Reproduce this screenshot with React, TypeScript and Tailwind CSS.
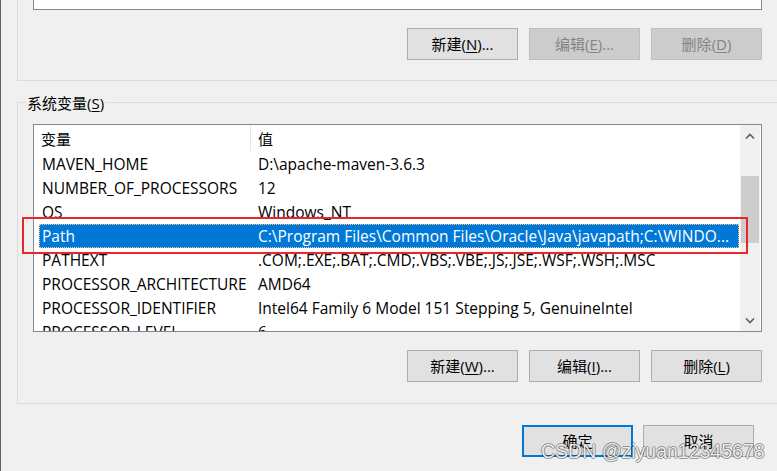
const FONT = "font-['Open_Sans','Noto_Sans_CJK_SC',sans-serif]";

type BtnProps = { label: string; hot: string; rest: string; disabled?: boolean; primary?: boolean };

function Btn({ label, hot, rest, disabled, primary }: BtnProps) {
  const base = "w-[111px] h-[32px] flex items-center justify-center text-[15px] leading-none";
  const look = disabled
    ? "bg-[#cccccc] border border-[#bfbfbf] text-[#838383]"
    : primary
      ? "bg-[#e1e1e1] border-2 border-[#0078d7] text-black"
      : "bg-[#e1e1e1] border border-[#adadad] text-black";
  return (
    <div className={`${base} ${look}`}>
      <span>
        {label}
        {hot && "("}
        {hot && <span className="underline underline-offset-2">{hot}</span>}
        {hot && ")"}
        {rest}
      </span>
    </div>
  );
}

const rows: [string, string][] = [
  ["MAVEN_HOME", "D:\\apache-maven-3.6.3"],
  ["NUMBER_OF_PROCESSORS", "12"],
  ["OS", "Windows_NT"],
  ["Path", "C:\\Program Files\\Common Files\\Oracle\\Java\\javapath;C:\\WINDO..."],
  ["PATHEXT", ".COM;.EXE;.BAT;.CMD;.VBS;.VBE;.JS;.JSE;.WSF;.WSH;.MSC"],
  ["PROCESSOR_ARCHITECTURE", "AMD64"],
  ["PROCESSOR_IDENTIFIER", "Intel64 Family 6 Model 151 Stepping 5, GenuineIntel"],
  ["PROCESSOR_LEVEL", "6"],
];

function Chevron({ up }: { up?: boolean }) {
  return (
    <svg width="10" height="6" viewBox="0 0 10 6" fill="none">
      <path
        d={up ? "M1 5.5 L5 1.5 L9 5.5" : "M1 0.5 L5 4.5 L9 0.5"}
        stroke="#606060"
        strokeWidth="1.6"
      />
    </svg>
  );
}

export default function App() {
  return (
    <div className={`relative w-[777px] h-[471px] overflow-hidden bg-[#f0f0f0] border-l border-[#5f5f5f] ${FONT}`}>
      {/* user variables group, bottom part only */}
      <div className="ml-[16px] h-[81px] border-l border-b border-[#dcdcdc]">
        <div className="ml-[15px] w-[729px] h-[10px] bg-white border-x border-b border-[#828790]" />
        <div className="mt-[18px] ml-[389px] flex gap-[11px]">
          <Btn label="新建" hot="N" rest="..." />
          <Btn label="编辑" hot="E" rest="..." disabled />
          <Btn label="删除" hot="D" rest="" disabled />
        </div>
      </div>

      {/* system variables group */}
      <div className="relative mt-[21px] ml-[16px] border-l border-t border-b border-[#dcdcdc] pt-[21px] pb-[21px]">
        <div className="absolute -top-[10px] left-[8px] px-[1px] bg-[#f0f0f0] text-[15px] leading-[20px] text-black">
          系统变量(<span className="underline underline-offset-2">S</span>)
        </div>

        <div className="ml-[15px] w-[729px] h-[208px] bg-white border border-[#828790] flex overflow-hidden">
          <div className="flex-1 flex flex-col text-[15.5px] text-black">
            <div className="h-[27px] flex items-center shrink-0">
              <div className="w-[217px] h-[25px] pl-[7px] pt-[2px] border-r border-[#e5e5e5] flex items-center text-[15px]">
                变量
              </div>
              <div className="pl-[7px] pt-[2px] text-[15px]">值</div>
            </div>
            {rows.map(([name, value]) => {
              const sel = name === "Path";
              return (
                <div
                  key={name}
                  className={`ml-[5px] mr-[1px] h-[24px] shrink-0 flex items-center whitespace-nowrap ${
                    sel ? "bg-[#0078d7] text-white outline-1 outline-dotted -outline-offset-1 outline-[#ffc58a]" : ""
                  }`}
                >
                  <div className="w-[212px] pl-[3px] leading-[24px]">{name}</div>
                  <div className="pl-[7px] leading-[24px]">{value}</div>
                </div>
              );
            })}
          </div>

          <div className="w-[20px] mr-[1px] bg-[#f0f0f0] flex flex-col">
            <div className="h-[21px] flex items-center justify-center">
              <Chevron up />
            </div>
            <div className="flex-1">
              <div className="mt-[30px] mx-[1px] h-[67px] bg-[#cdcdcd]" />
            </div>
            <div className="h-[21px] flex items-center justify-center">
              <Chevron />
            </div>
          </div>
        </div>

        <div className="mt-[18px] ml-[389px] flex gap-[11px]">
          <Btn label="新建" hot="W" rest="..." />
          <Btn label="编辑" hot="I" rest="..." />
          <Btn label="删除" hot="L" rest="" />
        </div>
      </div>

      <div className="mt-[21px] flex justify-end gap-[10px] pr-[23px]">
        <Btn label="确定" hot="" rest="" primary />
        <Btn label="取消" hot="" rest="" />
      </div>

      {/* red annotation box */}
      <div className="absolute left-[21px] top-[217px] w-[726px] h-[37px] border-2 border-[#e8262b]" />

      {/* watermark */}
      <div className="absolute left-[540px] top-[438px] text-[19.5px] leading-[26px] font-['Liberation_Sans',sans-serif] text-white/90 [text-shadow:1px_0_0_rgba(0,0,0,0.35),-1px_0_0_rgba(0,0,0,0.35),0_1px_0_rgba(0,0,0,0.35),0_-1px_0_rgba(0,0,0,0.35)]">
        CSDN @ziyuan12345678
      </div>
    </div>
  );
}
